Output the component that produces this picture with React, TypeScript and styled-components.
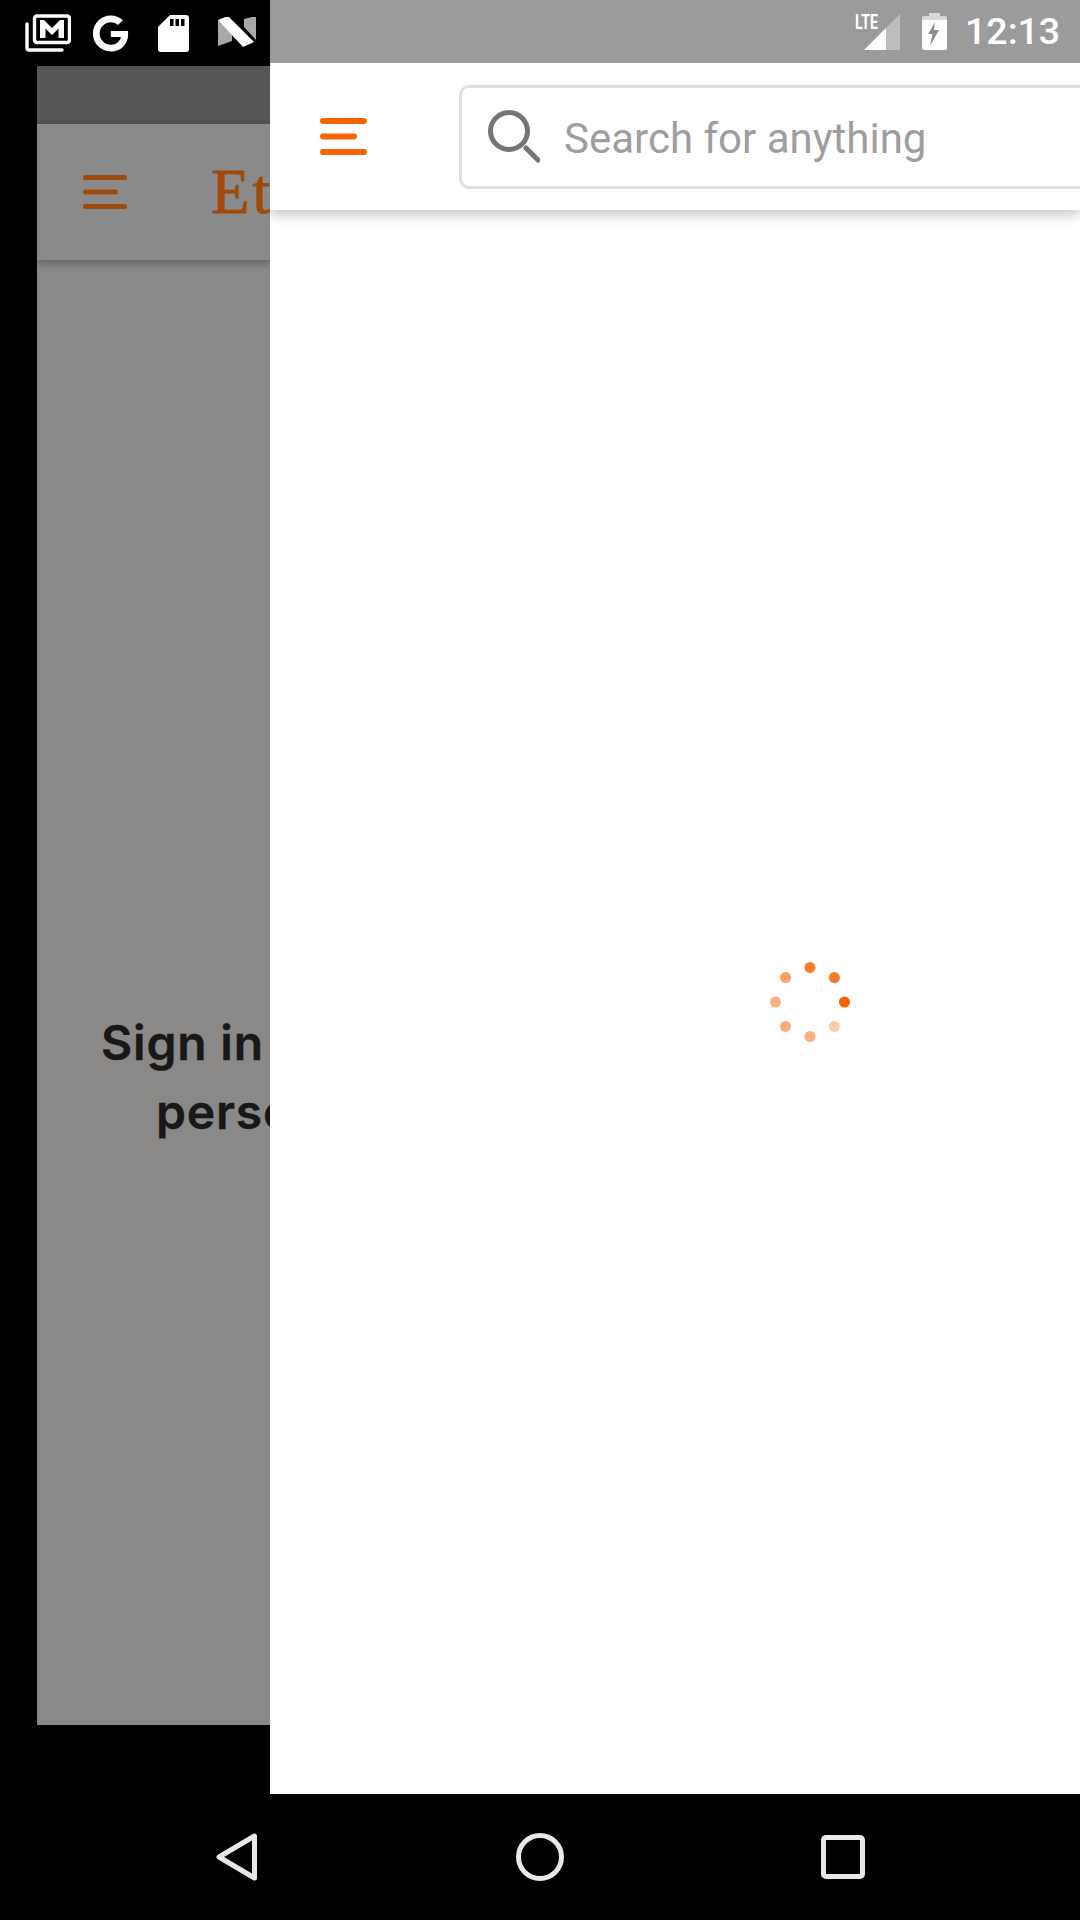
import React from "react";
import styled, { createGlobalStyle } from "styled-components";
import { FaGoogle } from "react-icons/fa";

const GlobalStyle = createGlobalStyle`
  html, body {
    margin: 0;
    padding: 0;
    background: #000;
  }
`;

// opacity of each spinner dot, clockwise from the top
const spinnerDots = [0.82, 0.85, 1, 0.32, 0.5, 0.55, 0.5, 0.6];

const App = () => {
  return (
    <Screen>
      <GlobalStyle />
      <Columns>
        <BackColumn>
          <LeftStatus>
            <StatusSlot>
              <svg width="46" height="38" viewBox="0 0 46 38">
                <path d="M2 10v24a2 2 0 0 0 2 2h33" fill="none" stroke="#fff" strokeWidth="3.4" strokeLinecap="round" />
                <rect x="9.500" y="2" width="35" height="26.500" rx="2.500" fill="none" stroke="#fff" strokeWidth="3.400" />
                <path d="M15 24V6h4l8 8 8-8h4v18h-5.500V14.500L27 21l-6.500-6.500V24z" fill="#fff" />
              </svg>
            </StatusSlot>
            <StatusSlot>
              <FaGoogle size={37} color="#fff" />
            </StatusSlot>
            <StatusSlot>
              <svg width="31" height="37" viewBox="0 0 31 37">
                <path d="M12 0h16a3 3 0 0 1 3 3v31a3 3 0 0 1-3 3H3a3 3 0 0 1-3-3V12z" fill="#fff" />
                <path d="M12 4h3.500v7H12zM17.500 4H21v7h-3.500zM23 4h3.500v7H23z" fill="#000" />
              </svg>
            </StatusSlot>
            <StatusSlot>
              <svg width="39" height="32" viewBox="0 1 39 32">
                <path d="M1 4v26l14-5v-8z" fill="#a8a8a8" />
                <path d="M27 3l12-3v24L27 11z" fill="#a8a8a8" />
                <path d="M1 4l10-4 26 26-11 5z" fill="#fff" />
              </svg>
            </StatusSlot>
          </LeftStatus>
          <BackPage>
            <BackTopBar />
            <BackHeader>
              <BackMenuIcon width="44" height="34" viewBox="0 0 44 34">
                <path d="M2.500 2.500h39M2.500 17h30M2.500 31.500h39" stroke="#a04a0a" strokeWidth="5" strokeLinecap="round" />
              </BackMenuIcon>
              <BackLogo>Etsy</BackLogo>
            </BackHeader>
            <BackBody>
              <SignInLine>Sign in to see your</SignInLine>
              <SignInLine $indent={119}>personalized picks</SignInLine>
            </BackBody>
          </BackPage>
        </BackColumn>

        <FrontColumn>
          <RightStatus>
            <svg width="46" height="38" viewBox="0 0 46 38">
              <path d="M45 1v36H9z" fill="#bdbdbd" />
              <path d="M31 15v22H9z" fill="#fff" />
              <rect x="0" y="0" width="27" height="18" fill="#9b9b9b" />
              <text x="0" y="16" fontFamily="Roboto, sans-serif" fontSize="20" fontWeight="700" fill="#fff" textLength="23" lengthAdjust="spacingAndGlyphs">
                LTE
              </text>
            </svg>
            <BatteryIcon width="25" height="37" viewBox="0 0 25 37">
              <path d="M7 0h11v3h5a2 2 0 0 1 2 2v3H0V5a2 2 0 0 1 2-2h5z" fill="#d8d8d8" />
              <path d="M0 7h25v28a2 2 0 0 1-2 2H2a2 2 0 0 1-2-2z" fill="#fff" />
              <path d="M13 9L6 21h4.500L8 33l9-16h-5z" fill="#8e8e8e" />
            </BatteryIcon>
            <Clock>12:13</Clock>
          </RightStatus>
          <Panel>
            <PanelHeader>
              <MenuButton>
                <svg width="47" height="37" viewBox="0 0 47 37">
                  <path d="M3 3h41M3 18.500h31M3 34h41" stroke="#f56400" strokeWidth="6" strokeLinecap="round" />
                </svg>
              </MenuButton>
              <SearchBox>
                <svg width="52" height="53" viewBox="0 0 52 53">
                  <circle cx="21" cy="21" r="18.500" fill="none" stroke="#757575" strokeWidth="5" />
                  <path d="M38 38l12 12" stroke="#757575" strokeWidth="5" strokeLinecap="round" />
                </svg>
                <SearchPlaceholder>Search for anything</SearchPlaceholder>
              </SearchBox>
            </PanelHeader>
            <PanelBody>
              <svg width="82" height="82" viewBox="-41 -41 82 82">
                {spinnerDots.map((opacity, i) => (
                  <circle
                    key={i}
                    cx={34.5 * Math.sin((i * Math.PI) / 4)}
                    cy={-34.5 * Math.cos((i * Math.PI) / 4)}
                    r="5.500"
                    fill="#f56400"
                    opacity={opacity}
                  />
                ))}
              </svg>
            </PanelBody>
          </Panel>
        </FrontColumn>
      </Columns>

      <NavBar>
        <svg width="48" height="48" viewBox="0 0 48 48">
          <path d="M42.500 3v42L7 24z" fill="none" stroke="#e8e8e8" strokeWidth="5" strokeLinejoin="round" />
        </svg>
        <svg width="48" height="48" viewBox="0 0 48 48">
          <circle cx="24" cy="24" r="21.500" fill="none" stroke="#e8e8e8" strokeWidth="5" />
        </svg>
        <svg width="48" height="48" viewBox="0 0 48 48">
          <rect x="3.500" y="4.500" width="39" height="39" rx="2.500" fill="none" stroke="#e8e8e8" strokeWidth="5" />
        </svg>
      </NavBar>
    </Screen>
  );
};

export default App;

const Screen = styled.div`
  width: 1080px;
  height: 1920px;
  display: flex;
  flex-direction: column;
  background: #000;
  overflow: hidden;
`;

const Columns = styled.div`
  display: flex;
  height: 1794px;
`;

const BackColumn = styled.div`
  width: 270px;
  display: flex;
  flex-direction: column;
`;

const LeftStatus = styled.div`
  height: 66px;
  padding-left: 16px;
  display: flex;
  align-items: center;
  box-sizing: border-box;
`;

const StatusSlot = styled.div`
  width: 63px;
  display: flex;
  justify-content: center;
`;

const BackPage = styled.div`
  margin-left: 37px;
  height: 1659px;
  display: flex;
  flex-direction: column;
  overflow: hidden;
  background: #8a8987;
`;

const BackTopBar = styled.div`
  height: 58px;
  background: #555;
`;

const BackHeader = styled.div`
  height: 136px;
  flex-shrink: 0;
  padding-left: 46px;
  display: flex;
  align-items: center;
  gap: 84px;
  background: #8a8a8a;
  box-shadow: 0 3px 8px rgba(0, 0, 0, 0.3);
`;

const BackMenuIcon = styled.svg`
  flex-shrink: 0;
`;

const BackLogo = styled.span`
  font-family: "Liberation Serif", serif;
  font-size: 63px;
  letter-spacing: 3px;
  line-height: 1;
  color: #a04a0a;
  white-space: nowrap;
  -webkit-text-stroke: 1px #a04a0a;
`;

const BackBody = styled.div`
  padding-top: 748px;
`;

const SignInLine = styled.div<{ $indent?: number }>`
  padding-left: ${({ $indent }) => $indent ?? 64}px;
  font-family: Inter, "Liberation Sans", sans-serif;
  font-size: 48px;
  font-weight: 600;
  letter-spacing: 0.8px;
  line-height: 69px;
  color: #181818;
  white-space: nowrap;
  -webkit-text-stroke: 0.4px #181818;
`;

const FrontColumn = styled.div`
  width: 810px;
  display: flex;
  flex-direction: column;
`;

const RightStatus = styled.div`
  height: 63px;
  padding-right: 24px;
  display: flex;
  align-items: center;
  justify-content: flex-end;
  background: #9b9b9b;
  box-sizing: border-box;
`;

const BatteryIcon = styled.svg`
  margin-left: 21px;
`;

const Clock = styled.span`
  margin-left: 18px;
  width: 91px;
  font-family: Roboto, sans-serif;
  font-size: 37.5px;
  font-weight: 500;
  line-height: 1;
  color: #fff;
  white-space: nowrap;
`;

const Panel = styled.div`
  flex: 1;
  display: flex;
  flex-direction: column;
  background: #fff;
  overflow: hidden;
`;

const PanelHeader = styled.div`
  height: 147px;
  flex-shrink: 0;
  display: flex;
  align-items: center;
  box-shadow: 0 4px 12px rgba(0, 0, 0, 0.25);
`;

const MenuButton = styled.div`
  width: 189px;
  flex-shrink: 0;
  padding-left: 50px;
  box-sizing: border-box;
  display: flex;
`;

const SearchBox = styled.div`
  flex: 1;
  height: 104px;
  margin-right: -20px;
  padding-left: 26px;
  display: flex;
  align-items: center;
  gap: 24px;
  border: 3px solid #e1e1e1;
  border-radius: 10px;
  box-sizing: border-box;
`;

const SearchPlaceholder = styled.span`
  font-family: Roboto, sans-serif;
  font-size: 42px;
  color: #9e9e9e;
  white-space: nowrap;
  margin-top: 4px;
`;

const PanelBody = styled.div`
  flex: 1;
  padding: 751px 0 0 499px;
`;

const NavBar = styled.div`
  height: 126px;
  padding: 39px 0 0 212px;
  display: flex;
  align-items: flex-start;
  gap: 256px;
  box-sizing: border-box;
`;
